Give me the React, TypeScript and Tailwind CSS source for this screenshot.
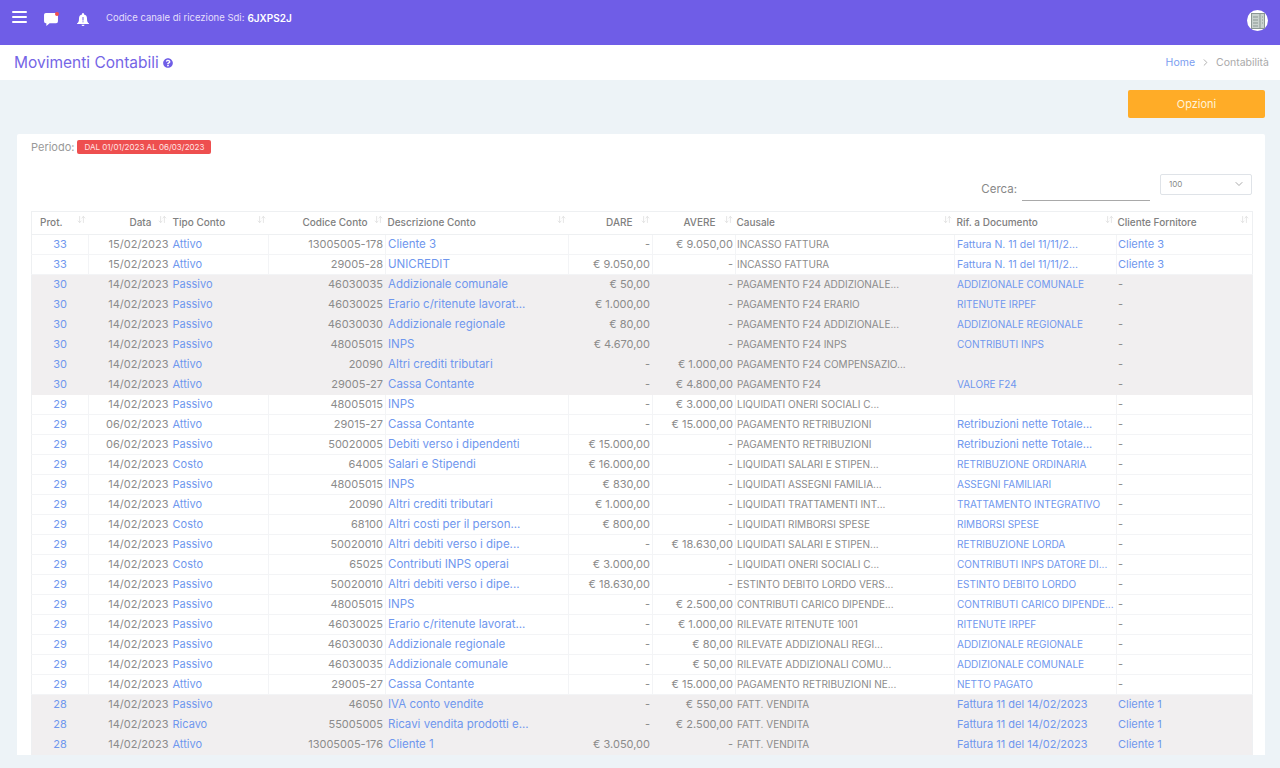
import { ArrowDownUp, ChevronDown, ChevronRight } from "lucide-react";
import { FaQuestionCircle } from "react-icons/fa";

type Row = {
  prot: string;
  data: string;
  tipo: string;
  codice: string;
  descr: string;
  dare: string;
  avere: string;
  causale: string;
  rif: string;
  cliente: string;
  grey?: boolean;
};

const r = (
  prot: string,
  data: string,
  tipo: string,
  codice: string,
  descr: string,
  dare: string,
  avere: string,
  causale: string,
  rif: string,
  cliente: string,
): Row => ({ prot, data, tipo, codice, descr, dare, avere, causale, rif, cliente, grey: prot === "30" || prot === "28" });

const rows: Row[] = [
  r("33", "15/02/2023", "Attivo", "13005005-178", "Cliente 3", "-", "€ 9.050,00", "INCASSO FATTURA", "Fattura N. 11 del 11/11/2...", "Cliente 3"),
  r("33", "15/02/2023", "Attivo", "29005-28", "UNICREDIT", "€ 9.050,00", "-", "INCASSO FATTURA", "Fattura N. 11 del 11/11/2...", "Cliente 3"),
  r("30", "14/02/2023", "Passivo", "46030035", "Addizionale comunale", "€ 50,00", "-", "PAGAMENTO F24 ADDIZIONALE...", "ADDIZIONALE COMUNALE", "-"),
  r("30", "14/02/2023", "Passivo", "46030025", "Erario c/ritenute lavorat...", "€ 1.000,00", "-", "PAGAMENTO F24 ERARIO", "RITENUTE IRPEF", "-"),
  r("30", "14/02/2023", "Passivo", "46030030", "Addizionale regionale", "€ 80,00", "-", "PAGAMENTO F24 ADDIZIONALE...", "ADDIZIONALE REGIONALE", "-"),
  r("30", "14/02/2023", "Passivo", "48005015", "INPS", "€ 4.670,00", "-", "PAGAMENTO F24 INPS", "CONTRIBUTI INPS", "-"),
  r("30", "14/02/2023", "Attivo", "20090", "Altri crediti tributari", "-", "€ 1.000,00", "PAGAMENTO F24 COMPENSAZIO...", "", "-"),
  r("30", "14/02/2023", "Attivo", "29005-27", "Cassa Contante", "-", "€ 4.800,00", "PAGAMENTO F24", "VALORE F24", "-"),
  r("29", "14/02/2023", "Passivo", "48005015", "INPS", "-", "€ 3.000,00", "LIQUIDATI ONERI SOCIALI C...", "", "-"),
  r("29", "06/02/2023", "Attivo", "29015-27", "Cassa Contante", "-", "€ 15.000,00", "PAGAMENTO RETRIBUZIONI", "Retribuzioni nette Totale...", "-"),
  r("29", "06/02/2023", "Passivo", "50020005", "Debiti verso i dipendenti", "€ 15.000,00", "-", "PAGAMENTO RETRIBUZIONI", "Retribuzioni nette Totale...", "-"),
  r("29", "14/02/2023", "Costo", "64005", "Salari e Stipendi", "€ 16.000,00", "-", "LIQUIDATI SALARI E STIPEN...", "RETRIBUZIONE ORDINARIA", "-"),
  r("29", "14/02/2023", "Passivo", "48005015", "INPS", "€ 830,00", "-", "LIQUIDATI ASSEGNI FAMILIA...", "ASSEGNI FAMILIARI", "-"),
  r("29", "14/02/2023", "Attivo", "20090", "Altri crediti tributari", "€ 1.000,00", "-", "LIQUIDATI TRATTAMENTI INT...", "TRATTAMENTO INTEGRATIVO", "-"),
  r("29", "14/02/2023", "Costo", "68100", "Altri costi per il person...", "€ 800,00", "-", "LIQUIDATI RIMBORSI SPESE", "RIMBORSI SPESE", "-"),
  r("29", "14/02/2023", "Passivo", "50020010", "Altri debiti verso i dipe...", "-", "€ 18.630,00", "LIQUIDATI SALARI E STIPEN...", "RETRIBUZIONE LORDA", "-"),
  r("29", "14/02/2023", "Costo", "65025", "Contributi INPS operai", "€ 3.000,00", "-", "LIQUIDATI ONERI SOCIALI C...", "CONTRIBUTI INPS DATORE DI...", "-"),
  r("29", "14/02/2023", "Passivo", "50020010", "Altri debiti verso i dipe...", "€ 18.630,00", "-", "ESTINTO DEBITO LORDO VERS...", "ESTINTO DEBITO LORDO", "-"),
  r("29", "14/02/2023", "Passivo", "48005015", "INPS", "-", "€ 2.500,00", "CONTRIBUTI CARICO DIPENDE...", "CONTRIBUTI CARICO DIPENDE...", "-"),
  r("29", "14/02/2023", "Passivo", "46030025", "Erario c/ritenute lavorat...", "-", "€ 1.000,00", "RILEVATE RITENUTE 1001", "RITENUTE IRPEF", "-"),
  r("29", "14/02/2023", "Passivo", "46030030", "Addizionale regionale", "-", "€ 80,00", "RILEVATE ADDIZIONALI REGI...", "ADDIZIONALE REGIONALE", "-"),
  r("29", "14/02/2023", "Passivo", "46030035", "Addizionale comunale", "-", "€ 50,00", "RILEVATE ADDIZIONALI COMU...", "ADDIZIONALE COMUNALE", "-"),
  r("29", "14/02/2023", "Attivo", "29005-27", "Cassa Contante", "-", "€ 15.000,00", "PAGAMENTO RETRIBUZIONI NE...", "NETTO PAGATO", "-"),
  r("28", "14/02/2023", "Passivo", "46050", "IVA conto vendite", "-", "€ 550,00", "FATT. VENDITA", "Fattura 11 del 14/02/2023", "Cliente 1"),
  r("28", "14/02/2023", "Ricavo", "55005005", "Ricavi vendita prodotti e...", "-", "€ 2.500,00", "FATT. VENDITA", "Fattura 11 del 14/02/2023", "Cliente 1"),
  r("28", "14/02/2023", "Attivo", "13005005-176", "Cliente 1", "€ 3.050,00", "-", "FATT. VENDITA", "Fattura 11 del 14/02/2023", "Cliente 1"),
];

const headers = [
  { label: "Prot.", align: "text-left pl-2" },
  { label: "Data", align: "text-right pr-[18px]" },
  { label: "Tipo Conto", align: "text-left pl-[3px]" },
  { label: "Codice Conto", align: "text-right pr-[18px]" },
  { label: "Descrizione Conto", align: "text-left pl-[2px]" },
  { label: "DARE", align: "text-right pr-[20px]" },
  { label: "AVERE", align: "text-right pr-[20px]" },
  { label: "Causale", align: "text-left pl-[1px]" },
  { label: "Rif. a Documento", align: "text-left pl-[2px]" },
  { label: "Cliente Fornitore", align: "text-left pl-[1px]" },
];

const rifSize = (s: string) => {
  if (s === s.toUpperCase()) return "text-[10px]";
  return s.startsWith("Fattura N.") ? "text-[10.500px]" : "text-[11px]";
};

function App() {
  return (
    <div className="h-[768px] w-[1280px] overflow-hidden bg-[#edf3f7] font-['Inter','Liberation_Sans',sans-serif] text-[#8b8b8b]">
      <header className="flex h-[45px] items-start bg-[#6f5de7] pl-[12px] pr-[12px] pt-[11px] text-white">
        <svg viewBox="0 0 15 12" className="h-[12px] w-[15px]" fill="#ffffff">
          <rect width="15" height="2" rx="1" />
          <rect y="5" width="15" height="2" rx="1" />
          <rect y="10" width="15" height="2" rx="1" />
        </svg>
        <span className="relative ml-[17px] mt-[2px]">
          <svg viewBox="0 0 15 14" className="block h-[13px] w-[14px]" fill="#ffffff">
            <path d="M2 0h11a2 2 0 0 1 2 2v7a2 2 0 0 1-2 2H6l-3.5 3v-3H2a2 2 0 0 1-2-2V2a2 2 0 0 1 2-2z" />
          </svg>
          <span className="absolute -right-[1px] -top-[1px] h-[4px] w-[4px] rounded-full bg-[#ef4d4d]" />
        </span>
        <svg viewBox="0 0 12 13" className="ml-[19px] mt-[2px] h-[13px] w-[12px]" fill="#ffffff">
          <path d="M6 0a1 1 0 0 1 1 1v.6A4 4 0 0 1 10 5.500c0 3 .6 3.800 2 5v.5H0v-.5c1.400-1.200 2-2 2-5a4 4 0 0 1 3-3.900V1a1 1 0 0 1 1-1z" />
          <path d="M4.500 11.800h3a1.500 1.200 0 0 1-3 0z" />
          <rect x="5.500" y="4" width="1" height="3.500" fill="#6f5de7" />
          <rect x="5.500" y="8.300" width="1" height="1" fill="#6f5de7" />
        </svg>
        <span className="ml-[17px] text-[9.5px] leading-[14px] text-[#e4dffb]">Codice canale di ricezione Sdi:</span>
        <span className="ml-[3px] text-[10px] font-semibold leading-[14px]">6JXPS2J</span>
        <span className="ml-auto -mt-[1px] flex h-[21px] w-[21px] items-center justify-center rounded-full bg-white">
          <svg viewBox="0 0 14 16" className="h-[16px] w-[14px]" fill="none" stroke="#8b9794" strokeWidth="1">
            <rect x="0.500" y="0.500" width="13" height="15" fill="#c9d2ce" />
            <path d="M9 1v14M2 4h5M2 7h5M2 10h5M2 13h5M11 4h1M11 7h1M11 10h1" />
          </svg>
        </span>
      </header>

      <div className="flex h-[35px] items-center justify-between bg-white pl-[14px] pr-[11px]">
        <div className="flex items-center gap-[4px]">
          <h1 className="text-[15.500px] text-[#7565e6]">Movimenti Contabili</h1>
          <FaQuestionCircle className="h-[10px] w-[10px] text-[#6f5de7]" />
        </div>
        <div className="flex items-center gap-[5px] text-[10.500px]">
          <span className="text-[#7b9df0]">Home</span>
          <ChevronRight className="h-[11px] w-[11px] text-[#aaaaaa]" />
          <span className="text-[#aaaaaa]">Contabilità</span>
        </div>
      </div>

      <div className="flex justify-end pr-[15px] pt-[10px]">
        <button className="h-[28px] w-[137px] rounded-[2px] bg-[#ffac27] text-[11px] text-[#fff3d8]">Opzioni</button>
      </div>

      <section className="ml-[17px] mr-[15px] mt-[16px] h-[621px] overflow-hidden rounded-t-[2px] bg-white pl-[14px] pr-[13px] pt-[5px]">
        <div className="flex items-center text-[11px] text-[#999999]">
          <span>Periodo:</span>
          <span className="ml-[3px] rounded-[2px] bg-[#ee4f4f] px-[7px] py-[2px] text-[8px] leading-[10px] text-[#ffe4e4]">
            DAL 01/01/2023 AL 06/03/2023
          </span>
        </div>

        <div className="mt-[18px] flex h-[37px] justify-end">
          <span className="mt-[7px] text-[11.500px] text-[#888888]">Cerca:</span>
          <span className="ml-[5px] mt-[3px] h-[24px] w-[128px] border-b border-[#a9a9a9]" />
          <span className="ml-[10px] flex h-[21px] w-[92px] items-center justify-between rounded-[2px] border border-[#dfe3e8] pl-[8px] pr-[6px] text-[8px] text-[#888888]">
            100
            <ChevronDown className="h-[12px] w-[12px] text-[#a9a9a9]" />
          </span>
        </div>

        <table className="w-[1221px] table-fixed border-collapse border border-[#eef0f2] whitespace-nowrap text-[11px] leading-[19px]">
          <colgroup>
            <col className="w-[57px]" />
            <col className="w-[81px]" />
            <col className="w-[99px]" />
            <col className="w-[117px]" />
            <col className="w-[183px]" />
            <col className="w-[84px]" />
            <col className="w-[83px]" />
            <col className="w-[219px]" />
            <col className="w-[162px]" />
            <col className="w-[136px]" />
          </colgroup>
          <thead>
            <tr className="h-[23px]">
              {headers.map((h) => (
                <th key={h.label} className={`relative border-b border-[#eef0f2] text-[10px] font-medium text-[#808080] ${h.align}`}>
                  {h.label}
                  <ArrowDownUp className="absolute right-[3px] top-[3px] h-[9px] w-[9px] text-[#dcdcdc]" />
                </th>
              ))}
            </tr>
          </thead>
          <tbody>
            {rows.map((row, i) => {
              // grey rows keep the same border box so every row stays 20px
              const line = row.grey ? "border-r border-b border-[#f1eff0]" : "border-r border-b border-[#f3f4f6]";
              const under = row.grey ? "border-b border-[#f1eff0]" : "border-b border-[#f3f4f6]";
              return (
                <tr key={i} className={`h-[20px] ${row.grey ? "bg-[#f1eff0]" : "bg-white"}`}>
                  <td className={`${line} text-center text-[#6f97ee]`}>{row.prot}</td>
                  <td className={`${under} pr-[1px] text-right`}>{row.data}</td>
                  <td className={`${line} pl-[3px] text-[#6f97ee]`}>{row.tipo}</td>
                  <td className={`${line} pr-[2px] text-right`}>{row.codice}</td>
                  <td className={`${line} pl-[2px] text-[11.500px] text-[#6f97ee]`}>{row.descr}</td>
                  <td className={`${line} pr-[2px] text-right`}>{row.dare}</td>
                  <td className={`${line} pr-[2px] text-right`}>{row.avere}</td>
                  <td className={`${line} pl-[1px] text-[10px]`}>{row.causale}</td>
                  <td className={`${line} overflow-hidden pl-[2px] text-[#6f97ee] ${rifSize(row.rif)}`}>{row.rif}</td>
                  <td className={`${under} pl-[1px] ${row.cliente === "-" ? "" : "text-[#6f97ee]"}`}>{row.cliente}</td>
                </tr>
              );
            })}
          </tbody>
        </table>
      </section>
    </div>
  );
}

export default App;
